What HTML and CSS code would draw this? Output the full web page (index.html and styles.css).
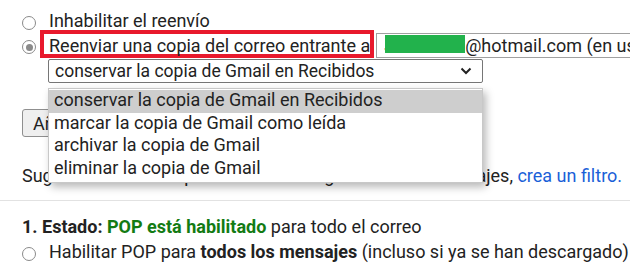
FILE: index.html
```html
<!DOCTYPE html>
<html lang="es">
<head>
<meta charset="utf-8">
<link rel="stylesheet" href="styles.css">
</head>
<body>
<div class="page">
  <div class="row row-off">
    <span class="radio"></span>
    <span class="label">Inhabilitar el reenvío</span>
  </div>
  <div class="row row-on">
    <span class="radio checked"></span>
    <span class="highlight">Reenviar una copia del correo entrante a</span>
    <span class="address"><span class="initial">J</span><span class="redact"></span><span>@hotmail.com (en uso)</span></span>
  </div>
  <div class="select-row">
    <div class="select">
      <span>conservar la copia de Gmail en Recibidos</span>
      <svg class="chev" width="12" height="8" viewBox="0 0 12 8"><path d="M1.5 1.5 L6 6 L10.5 1.5" fill="none" stroke="#222" stroke-width="2"/></svg>
    </div>
    <ul class="popup">
      <li class="active">conservar la copia de Gmail en Recibidos</li>
      <li>marcar la copia de Gmail como leída</li>
      <li>archivar la copia de Gmail</li>
      <li>eliminar la copia de Gmail</li>
    </ul>
  </div>
  <div class="btn-row">
    <button class="btn">Añadir una dirección de reenvío</button>
  </div>
  <p class="tip">Sugerencia: Si solo quieres reenviar algunos de tus mensajes, <a class="link" href="#">crea un filtro.</a></p>
</div>
<div class="divider"></div>
<div class="page">
  <p class="status"><b>1. Estado: </b><b class="ok">POP está habilitado</b> para todo el correo</p>
  <div class="row row-pop">
    <span class="radio"></span>
    <span class="label">Habilitar POP para <b>todos los mensajes</b> (incluso si ya se han descargado)</span>
  </div>
</div>
</body>
</html>
```
FILE: styles.css
```css
* { box-sizing: border-box; }
html, body { margin: 0; padding: 0; background: #fff; }
body {
  font-family: Roboto, "Noto Sans", Arial, sans-serif;
  font-size: 18px;
  color: #222;
  width: 630px;
  height: 264px;
  overflow: hidden;
}
.page { padding-left: 22px; white-space: nowrap; }
.row { display: flex; align-items: flex-start; }
.label { line-height: 22px; }
.row-off { height: 30px; }
.row-off .radio { margin-top: 16px; }
.row-off .label { margin-top: 10px; }
.row-on { height: 28px; }
.row-on .radio { margin-top: 10px; margin-right: 4px; }
.radio {
  width: 14px; height: 14px;
  border: 1px solid #8a8a8a;
  border-radius: 50%;
  flex: none;
  margin-right: 13px;
  position: relative;
  background: #fff;
}
.radio.checked::after {
  content: "";
  position: absolute;
  left: 2.5px; top: 2.5px;
  width: 7px; height: 7px;
  border-radius: 50%;
  background: #8a8a8a;
}
.highlight {
  border: 4px solid #e8192c;
  height: 28px;
  line-height: 21px;
  padding: 1px 0 0 5px;
  flex: none;
}
.address {
  margin-left: 2px;
  margin-top: 3px;
  height: 25px;
  line-height: 23px;
  border: 1px solid #a0a0a0;
  border-right: none;
  padding-left: 7px;
  flex: none;
  display: flex;
  align-items: flex-start;
}
.initial { width: 0; }
.redact {
  display: block;
  width: 80px; height: 18px;
  background: #22b24c;
  margin: 1px 0 0 1px;
}
.select-row { position: relative; margin-left: 26px; margin-top: 1px; }
.select {
  width: 435px; height: 24px;
  border: 1px solid #767676;
  border-radius: 2px;
  display: flex; align-items: center; justify-content: space-between;
  padding: 0 10px 0 6px;
  background: #fff;
  font-size: 17.5px;
  line-height: 22px;
}
.chev { flex: none; }
.popup {
  position: absolute;
  left: 0; top: 29px;
  width: 435px;
  margin: 0; padding: 1px 0;
  list-style: none;
  background: #fff;
  border: 1px solid #c8c8c8;
  box-shadow: 3px 4px 8px rgba(0,0,0,0.28);
  z-index: 2;
}
.popup li {
  height: 22.67px;
  line-height: 20.67px;
  padding-left: 5px;
}
.popup li.active { background: #cecece; }
.btn-row { margin-top: 26px; height: 28px; }
.btn {
  font: inherit;
  color: #222;
  height: 28px;
  padding: 0 10px;
  border: 1px solid #8f8f8f;
  border-radius: 3px;
  background: #efefef;
  display: block;
}
.tip { margin: 28px 0 0; line-height: 22px; }
.link { color: #1a5fd8; text-decoration: none; }
.divider { height: 1px; background: #e2e2e2; margin-top: 13px; }
.status { margin: 15px 0 0; line-height: 22px; }
.status b { font-weight: 700; }
.ok { color: #137b13; }
.row-pop { margin-top: 3px; }
.row-pop .radio { margin-top: 6px; }
.row-pop b { font-weight: 700; }
```
